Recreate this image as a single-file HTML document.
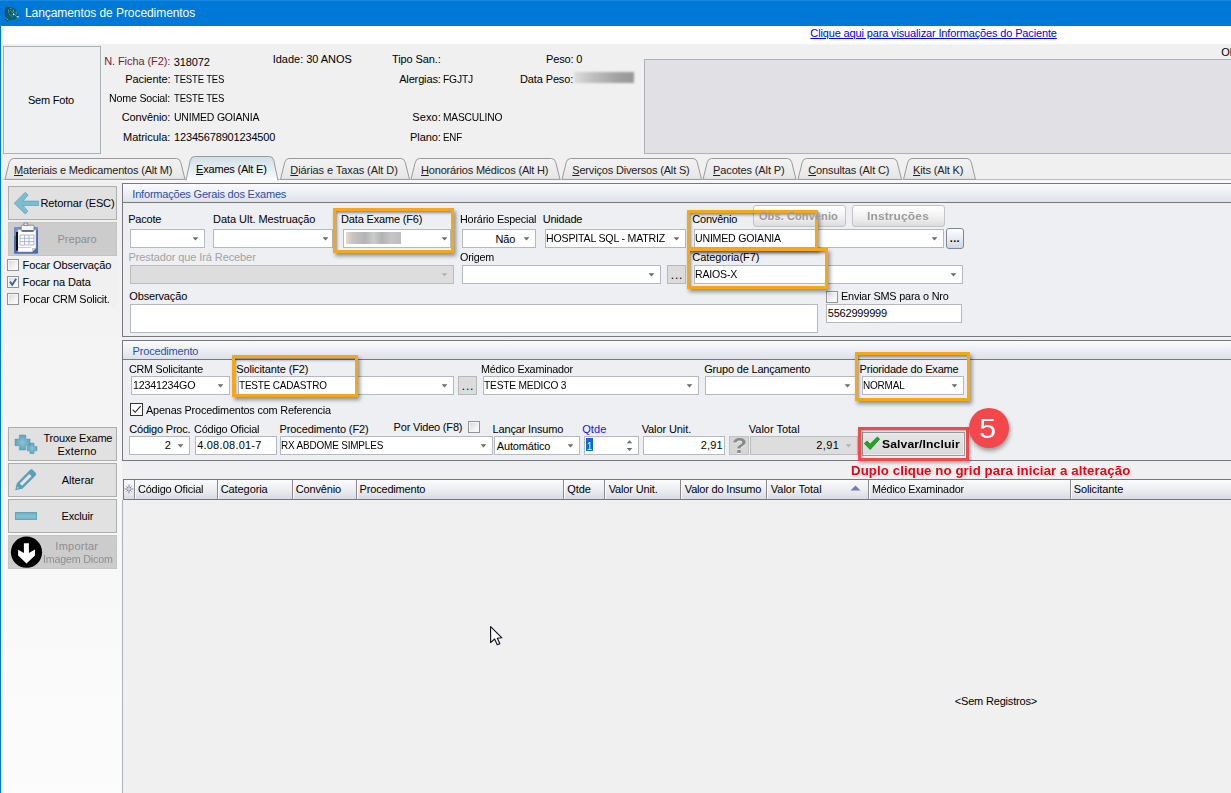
<!DOCTYPE html><html><head><meta charset="utf-8"><title>Lançamentos de Procedimentos</title><style>
html,body{margin:0;padding:0;background:#f0f0f0;}
body{width:1231px;height:793px;overflow:hidden;font-family:"Liberation Sans",sans-serif;font-size:11px;}
#w{position:relative;width:1231px;height:793px;overflow:hidden;background:#f0f0f0;}
#w>div,#w>svg{position:absolute;box-sizing:border-box;}
.t{position:absolute;white-space:nowrap;transform-origin:0 50%;}
u{text-decoration:underline;}

</style></head><body><div id="w">
<div style="left:0px;top:0px;width:1231px;height:26px;background:#0078d7;border-top:1px solid #1a86dc;"></div>
<div style="left:0px;top:26px;width:1231px;height:18px;background:#fff;"></div>
<div style="left:0px;top:26px;width:1px;height:767px;background:#0078d7;"></div>
<div style="left:1px;top:44px;width:2px;height:749px;background:#fafafa;"></div>
<svg style="left:0;top:0" width="26" height="26" viewBox="0 0 26 26"><defs><linearGradient id="gic" x1="0" y1="0" x2="1" y2="1"><stop offset="0" stop-color="#0c4a58"/><stop offset=".6" stop-color="#0a6470"/><stop offset="1" stop-color="#0b5f73"/></linearGradient></defs><path d="M5.2 7.4 Q6.5 5.8 9 7 L14 8.3 Q17.5 10.5 18.4 15.8 L18.9 17.6 Q14 20.8 8 20.6 Q5 19.5 5 17.5 Q4 12 5.2 7.4Z" fill="url(#gic)"/><path d="M8.4 9.8v3.2M10.4 8.6l1.6-.3M10.5 10.5l6 6M9.4 14.3l3 2.6M13.4 9.6v2.6M16.2 11.8v2.8" stroke="#bfe4e4" stroke-width=".9" stroke-dasharray="1 .8" fill="none" opacity=".85"/><circle cx="13.5" cy="14.5" r=".7" fill="#fff"/><path d="M16.4 16.2h2.6v1.4h-2z" fill="#bfe0f0"/><path d="M5.6 18.2l2.6 2.2" stroke="#d6ecf6" stroke-width="1" stroke-dasharray="1 .7"/><path d="M5.2 18.9l2.8 2.3" stroke="#06222c" stroke-width=".8"/></svg>
<div style="left:3px;top:46px;width:98px;height:108px;background:#eff0f2;border:1px solid #a9b0b8;"></div>
<div style="left:574px;top:71.5px;width:60px;height:11.5px;background:linear-gradient(90deg,#dedede,#c4c4c4 25%,#b2b2b2 50%,#a0a0a0 75%,#989898);filter:blur(.8px);"></div>
<div style="left:644px;top:59px;width:596px;height:95px;background:#e1e1e5;border:1px solid #adb2b8;"></div>
<svg style="left:0;top:150px" width="1231" height="36" viewBox="0 150 1231 36"><defs><linearGradient id="ga" x1="0" y1="0" x2="0" y2="1"><stop offset="0" stop-color="#cfe0e7"/><stop offset="1" stop-color="#fbfcfd"/></linearGradient><linearGradient id="gi" x1="0" y1="0" x2="0" y2="1"><stop offset="0" stop-color="#f3f3f3"/><stop offset="1" stop-color="#e6e6e6"/></linearGradient></defs><rect x="3" y="180" width="1230" height="3" fill="#f8f8f8"/><path d="M3 179.5H1231" stroke="#bcbcbc" stroke-width="1"/><path d="M5 179.4 L9.2 162.5 Q10.2 158.5 13.5 158.5 H176.5 Q179.8 158.5 180.8 162.5 L185 179.4 Z" fill="url(#gi)" stroke="#9a9a9a" stroke-width="1"/><path d="M186 180.5 L190.2 160.5 Q191.2 156.5 194.5 156.5 H269.5 Q272.8 156.5 273.8 160.5 L278 180.5" fill="url(#ga)" stroke="#9a9a9a" stroke-width="1"/><path d="M280.5 179.4 L284.7 162.5 Q285.7 158.5 289.0 158.5 H401.0 Q404.3 158.5 405.3 162.5 L409.5 179.4 Z" fill="url(#gi)" stroke="#9a9a9a" stroke-width="1"/><path d="M411 179.4 L415.2 162.5 Q416.2 158.5 419.5 158.5 H551.5 Q554.8 158.5 555.8 162.5 L560 179.4 Z" fill="url(#gi)" stroke="#9a9a9a" stroke-width="1"/><path d="M562 179.4 L566.2 162.5 Q567.2 158.5 570.5 158.5 H693.0 Q696.3 158.5 697.3 162.5 L701.5 179.4 Z" fill="url(#gi)" stroke="#9a9a9a" stroke-width="1"/><path d="M703 179.4 L707.2 162.5 Q708.2 158.5 711.5 158.5 H787.5 Q790.8 158.5 791.8 162.5 L796 179.4 Z" fill="url(#gi)" stroke="#9a9a9a" stroke-width="1"/><path d="M798 179.4 L802.2 162.5 Q803.2 158.5 806.5 158.5 H893.0 Q896.3 158.5 897.3 162.5 L901.5 179.4 Z" fill="url(#gi)" stroke="#9a9a9a" stroke-width="1"/><path d="M903.5 179.4 L907.7 162.5 Q908.7 158.5 912.0 158.5 H967.0 Q970.3 158.5 971.3 162.5 L975.5 179.4 Z" fill="url(#gi)" stroke="#9a9a9a" stroke-width="1"/></svg>
<div style="left:3px;top:181px;width:119px;height:612px;background:linear-gradient(#f0f0f0,#fcfcfc);"></div>
<div style="left:7px;top:258px;width:111px;height:49px;background:#f0f0f0;"></div>
<div style="left:8px;top:186px;width:109px;height:34px;background:#e1e1e1;border:1px solid #adadad;"></div>
<svg style="left:0px;top:186px" width="50" height="34" viewBox="0 186 50 34"><path d="M14.2 203.3 L25.2 192.3 L28.2 195.1 L23 201.1 H38.6 V205.5 H23 L28 211.2 L25.2 214 Z" fill="#7bbcd0" stroke="#5fa3b8" stroke-width=".7"/></svg>
<div style="left:8px;top:222px;width:109px;height:33.5px;background:#cccccc;border:1px solid #c4c4c4;"></div>
<svg style="left:0;top:222px" width="50" height="34" viewBox="0 222 50 34"><rect x="14" y="227" width="24" height="26.7" rx="1" fill="#4a6cb8"/><path d="M14 227h24v3L14 236z" fill="#8ea6d8" opacity=".6"/><path d="M17.8 229.6H36V248l-4 3.9H17.8z" fill="#fff" stroke="#9a9a9a" stroke-width=".5"/><path d="M32 251.9V248h4z" fill="#c8c8c8"/><path d="M20 235h14v10H20zM20 238.3h14M20 241.6h14M24.5 235v10M29 235v10" fill="none" stroke="#9aa8c8" stroke-width=".8"/><path d="M18 247.5h13" stroke="#c0c0c0" stroke-width=".8"/><rect x="21.2" y="225.2" width="12.8" height="6.3" rx="1.2" fill="#f4f4f4" stroke="#6a6a6a" stroke-width=".7"/><rect x="24" y="223" width="3.8" height="2.6" fill="#e0e0e0" stroke="#6a6a6a" stroke-width=".6"/><path d="M22 230.8h11.5" stroke="#333" stroke-width="1"/><rect x="16" y="232" width="2" height="18.5" fill="#111"/></svg>
<div style="left:7px;top:259px;width:12px;height:12px;background:linear-gradient(135deg,#d4d7dc,#f6f6f6 70%,#fdfdfd);border:1px solid #929394;box-shadow:inset 0 0 0 1px #f6f6f6;"></div>
<div style="left:7px;top:276px;width:12px;height:12px;background:linear-gradient(135deg,#d4d7dc,#f6f6f6 70%,#fdfdfd);border:1px solid #929394;box-shadow:inset 0 0 0 1px #f6f6f6;"></div>
<svg style="left:8px;top:277px" width="10" height="10" viewBox="0 0 10 10"><path d="M2 4.6 L4.2 7.8 L8.2 1.8" stroke="#4664a0" stroke-width="1.9" fill="none"/></svg>
<div style="left:7px;top:293px;width:12px;height:12px;background:linear-gradient(135deg,#d4d7dc,#f6f6f6 70%,#fdfdfd);border:1px solid #929394;box-shadow:inset 0 0 0 1px #f6f6f6;"></div>
<div style="left:8px;top:427px;width:109px;height:34px;background:#e1e1e1;border:1px solid #adadad;"></div>
<svg style="left:0;top:427px" width="50" height="34" viewBox="0 427 50 34"><defs><radialGradient id="gp" cx=".5" cy=".5" r=".6"><stop offset="0" stop-color="#86c5d7"/><stop offset="1" stop-color="#5a9db4"/></radialGradient></defs><path d="M19.3 435h6.5v4.1h4.3v6.6h-4.3v4.3h-6.5v-4.3H15v-6.6h4.3z" fill="url(#gp)" stroke="#5596ad" stroke-width=".5"/><path d="M29.9 443.1h4.2v3.5H37v4.2h-2.9v2.8h-4.2v-2.8h-2.7v-4.2h2.7z" fill="url(#gp)" stroke="#5596ad" stroke-width=".5"/></svg>
<div style="left:8px;top:463px;width:109px;height:33.5px;background:#e1e1e1;border:1px solid #adadad;"></div>
<svg style="left:0;top:463px" width="50" height="34" viewBox="0 463 50 34"><g transform="translate(15.2 490.3) rotate(-45)"><path d="M0 0 L6.2 -3.9 H25 Q26.8 -3.9 26.8 -2.1 V2.1 Q26.8 3.9 25 3.9 H6.2 Z" fill="#5c9fb6"/><rect x="8" y="-1.6" width="13.5" height="3.2" fill="#e4e4e4"/><circle cx="3.6" cy="0" r=".9" fill="#a8d0dc"/></g></svg>
<div style="left:8px;top:499px;width:109px;height:33.5px;background:#e1e1e1;border:1px solid #adadad;"></div>
<div style="left:15px;top:512px;width:22px;height:8px;background:linear-gradient(#6fb0c5,#82c2d5 50%,#74b6ca);border:1px solid #62a5bb;"></div>
<div style="left:8px;top:535px;width:109px;height:33.5px;background:#cccccc;border:1px solid #c4c4c4;"></div>
<svg style="left:0;top:535px" width="50" height="34" viewBox="0 535 50 34"><circle cx="26.5" cy="552.2" r="15.6" fill="#000"/><path d="M23.9 543.3 H28.9 V553 L35 549.5 V555.4 L26.5 563.5 L18.1 555.4 V549.8 L23.9 553 Z" fill="#fff"/></svg>
<div style="left:122px;top:183px;width:1118px;height:154px;background:#eeeff2;border:1px solid #77777f;"></div>
<div style="left:123px;top:184px;width:1117px;height:19px;background:linear-gradient(#fbfbfc,#eef0f4 45%,#dee1e8);border-bottom:1px solid #77777f;"></div>
<div style="left:122px;top:340px;width:1118px;height:121px;background:#eeeff2;border:1px solid #77777f;"></div>
<div style="left:123px;top:341px;width:1117px;height:18.5px;background:linear-gradient(#fbfbfc,#eef0f4 45%,#dee1e8);border-bottom:1px solid #77777f;"></div>
<div style="left:122px;top:500px;width:1px;height:293px;background:#aab0b7;"></div>
<div style="left:130px;top:229px;width:75px;height:19px;background:#fff;border:1px solid #b4b8bf;"></div>
<svg style="left:191.5px;top:237.0px" width="7" height="4" viewBox="0 0 7 4"><path d="M0.6 0.2h5.8L3.5 3.5z" fill="#6a6a6a"/></svg>
<div style="left:213px;top:229px;width:120px;height:19px;background:#fff;border:1px solid #b4b8bf;"></div>
<svg style="left:321.5px;top:237.0px" width="7" height="4" viewBox="0 0 7 4"><path d="M0.6 0.2h5.8L3.5 3.5z" fill="#6a6a6a"/></svg>
<div style="left:343px;top:229px;width:108px;height:19px;background:#fff;border:1px solid #b4b8bf;"></div>
<svg style="left:440.5px;top:237.0px" width="7" height="4" viewBox="0 0 7 4"><path d="M0.6 0.2h5.8L3.5 3.5z" fill="#6a6a6a"/></svg>
<div style="left:346px;top:232px;width:55px;height:11.5px;background:linear-gradient(90deg,#ecd8cc,#c4c4c4 12%,#b4b4b4 35%,#cbcbcb 50%,#b2b2b2 65%,#c6c6c6 82%,#bdbdbd);filter:blur(.7px);"></div>
<div style="left:462px;top:229px;width:74px;height:19px;background:#fff;border:1px solid #b4b8bf;"></div>
<svg style="left:522.5px;top:237.0px" width="7" height="4" viewBox="0 0 7 4"><path d="M0.6 0.2h5.8L3.5 3.5z" fill="#6a6a6a"/></svg>
<div style="left:545px;top:229px;width:140.5px;height:19px;background:#fff;border:1px solid #b4b8bf;"></div>
<svg style="left:672.5px;top:237.0px" width="7" height="4" viewBox="0 0 7 4"><path d="M0.6 0.2h5.8L3.5 3.5z" fill="#6a6a6a"/></svg>
<div style="left:753px;top:205px;width:92.5px;height:22px;background:linear-gradient(#ffffff,#f3f3f3 50%,#dddddd);border:1px solid #c3c3c3;border-radius:3px;"></div>
<div style="left:852px;top:205px;width:92.5px;height:22px;background:linear-gradient(#ffffff,#f3f3f3 50%,#dddddd);border:1px solid #c3c3c3;border-radius:3px;"></div>
<div style="left:694px;top:229px;width:250px;height:19px;background:#fff;border:1px solid #b4b8bf;"></div>
<svg style="left:930.5px;top:237.0px" width="7" height="4" viewBox="0 0 7 4"><path d="M0.6 0.2h5.8L3.5 3.5z" fill="#6a6a6a"/></svg>
<div style="left:946px;top:228px;width:17.5px;height:20.5px;background:linear-gradient(#fdfdfd,#e9ecf2 50%,#cfd6e4);border:1px solid #7f8793;border-radius:3px;"></div>
<div style="left:130px;top:265px;width:324px;height:19px;background:#dddddd;border:1px solid #bcbcbc;"></div>
<svg style="left:440.5px;top:273.0px" width="7" height="4" viewBox="0 0 7 4"><path d="M0.6 0.2h5.8L3.5 3.5z" fill="#b3b3b3"/></svg>
<div style="left:462px;top:265px;width:199px;height:19px;background:#fff;border:1px solid #b4b8bf;"></div>
<svg style="left:647.5px;top:273.0px" width="7" height="4" viewBox="0 0 7 4"><path d="M0.6 0.2h5.8L3.5 3.5z" fill="#6a6a6a"/></svg>
<div style="left:667px;top:265px;width:19px;height:19px;background:#dcdcdc;border:1px solid #b8b8b8;"></div>
<div style="left:694px;top:265px;width:269px;height:19px;background:#fff;border:1px solid #b4b8bf;"></div>
<svg style="left:949.5px;top:273.0px" width="7" height="4" viewBox="0 0 7 4"><path d="M0.6 0.2h5.8L3.5 3.5z" fill="#6a6a6a"/></svg>
<div style="left:130px;top:304px;width:688px;height:29px;background:#fff;border:1px solid #b4b8bf;"></div>
<div style="left:826px;top:291px;width:12px;height:12px;background:linear-gradient(135deg,#d4d7dc,#f6f6f6 70%,#fdfdfd);border:1px solid #929394;box-shadow:inset 0 0 0 1px #f6f6f6;"></div>
<div style="left:826px;top:304px;width:136px;height:19px;background:#fff;border:1px solid #b4b8bf;"></div>
<div style="left:131px;top:376px;width:99px;height:19px;background:#fff;border:1px solid #b4b8bf;"></div>
<svg style="left:216.5px;top:384.0px" width="7" height="4" viewBox="0 0 7 4"><path d="M0.6 0.2h5.8L3.5 3.5z" fill="#6a6a6a"/></svg>
<div style="left:238px;top:376px;width:216px;height:19px;background:#fff;border:1px solid #b4b8bf;"></div>
<svg style="left:440.5px;top:384.0px" width="7" height="4" viewBox="0 0 7 4"><path d="M0.6 0.2h5.8L3.5 3.5z" fill="#6a6a6a"/></svg>
<div style="left:458px;top:376px;width:19px;height:19px;background:#dcdcdc;border:1px solid #b8b8b8;"></div>
<div style="left:483px;top:376px;width:216px;height:19px;background:#fff;border:1px solid #b4b8bf;"></div>
<svg style="left:685.5px;top:384.0px" width="7" height="4" viewBox="0 0 7 4"><path d="M0.6 0.2h5.8L3.5 3.5z" fill="#6a6a6a"/></svg>
<div style="left:705px;top:376px;width:152px;height:19px;background:#fff;border:1px solid #b4b8bf;"></div>
<svg style="left:843.5px;top:384.0px" width="7" height="4" viewBox="0 0 7 4"><path d="M0.6 0.2h5.8L3.5 3.5z" fill="#6a6a6a"/></svg>
<div style="left:862px;top:376px;width:102px;height:19px;background:#fff;border:1px solid #b4b8bf;"></div>
<svg style="left:950.5px;top:384.0px" width="7" height="4" viewBox="0 0 7 4"><path d="M0.6 0.2h5.8L3.5 3.5z" fill="#6a6a6a"/></svg>
<div style="left:130px;top:403px;width:13px;height:13px;background:#fff;border:1px solid #333;"></div>
<svg style="left:130px;top:403px" width="13" height="13" viewBox="0 0 13 13"><path d="M2.6 6.6 L5.2 9.3 L10.6 3.2" stroke="#222" stroke-width="1.1" fill="none"/></svg>
<div style="left:129px;top:436px;width:61px;height:19px;background:#fff;border:1px solid #b4b8bf;"></div>
<svg style="left:176.5px;top:444.0px" width="7" height="4" viewBox="0 0 7 4"><path d="M0.6 0.2h5.8L3.5 3.5z" fill="#6a6a6a"/></svg>
<div style="left:195px;top:436px;width:82px;height:19px;background:#fff;border:1px solid #b4b8bf;"></div>
<div style="left:280px;top:436px;width:212.5px;height:19px;background:#fff;border:1px solid #b4b8bf;"></div>
<svg style="left:479.5px;top:444.0px" width="7" height="4" viewBox="0 0 7 4"><path d="M0.6 0.2h5.8L3.5 3.5z" fill="#6a6a6a"/></svg>
<div style="left:468px;top:421px;width:12px;height:12px;background:linear-gradient(135deg,#d4d7dc,#f6f6f6 70%,#fdfdfd);border:1px solid #929394;box-shadow:inset 0 0 0 1px #f6f6f6;"></div>
<div style="left:494px;top:436px;width:86px;height:19px;background:#fff;border:1px solid #b4b8bf;"></div>
<svg style="left:566.9px;top:444.0px" width="7" height="4" viewBox="0 0 7 4"><path d="M0.6 0.2h5.8L3.5 3.5z" fill="#6a6a6a"/></svg>
<div style="left:584px;top:436px;width:54.5px;height:19px;background:#fff;border:1px solid #b4b8bf;"></div>
<div style="left:586px;top:438px;width:7px;height:13px;background:#0a6cd6;"></div>
<svg style="left:620px;top:436px" width="18" height="19" viewBox="620 436 18 19"><path d="M626.7 443.2 L629.5 440.2 L632.3 443.2z" fill="#6a6a6a"/><path d="M626.7 448 L629.5 451 L632.3 448z" fill="#6a6a6a"/></svg>
<div style="left:643px;top:436px;width:82px;height:19px;background:#fff;border:1px solid #b4b8bf;"></div>
<div style="left:729px;top:436px;width:20px;height:19px;background:#d6d6d6;border:1px solid #c2c2c2;"></div>
<div style="left:750px;top:436px;width:108px;height:19px;background:#dddddd;border:1px solid #bcbcbc;"></div>
<svg style="left:844.5px;top:444.0px" width="7" height="4" viewBox="0 0 7 4"><path d="M0.6 0.2h5.8L3.5 3.5z" fill="#b3b3b3"/></svg>
<div style="left:861.5px;top:432px;width:103.0px;height:23.5px;background:linear-gradient(#e6e6e6,#d8d8d8);border:1px solid #9a9a9a;box-shadow:inset 0 0 0 1px #ececec;"></div>
<svg style="left:863px;top:435px" width="18" height="17" viewBox="0 0 18 17"><path d="M1.4 8.4 L4.2 6 L7 9.2 L14.4 2 L16.6 4 L7.2 14.6 Z" fill="#1fa81f" stroke="#0d7a12" stroke-width=".7"/></svg>
<div style="left:858px;top:427px;width:111px;height:34px;border:3.4px solid #f04a4c;box-shadow:1px 2px 3px rgba(0,0,0,.3), inset 1px 1px 2px rgba(0,0,0,.3);"></div>
<div style="left:968.5px;top:408px;width:40px;height:40px;border-radius:50%;background:#f3474b;box-shadow:1px 3px 4px rgba(0,0,0,.35);"></div>
<div style="left:333px;top:208px;width:121px;height:45px;border:3px solid #f6a716;box-shadow:2px 3px 4px rgba(0,0,0,.4), inset 2px 3px 3px -1px rgba(0,0,0,.42);"></div>
<div style="left:687px;top:210px;width:131px;height:39.5px;border:3px solid #f6a716;box-shadow:2px 3px 4px rgba(0,0,0,.4), inset 2px 3px 3px -1px rgba(0,0,0,.42);"></div>
<div style="left:687px;top:248px;width:141px;height:41px;border:3px solid #f6a716;box-shadow:2px 3px 4px rgba(0,0,0,.4), inset 2px 3px 3px -1px rgba(0,0,0,.42);"></div>
<div style="left:232px;top:355px;width:126px;height:42px;border:3px solid #f6a716;box-shadow:2px 3px 4px rgba(0,0,0,.4), inset 2px 3px 3px -1px rgba(0,0,0,.42);"></div>
<div style="left:855px;top:352px;width:115px;height:49px;border:3px solid #f6a716;box-shadow:2px 3px 4px rgba(0,0,0,.4), inset 2px 3px 3px -1px rgba(0,0,0,.42);"></div>
<div style="left:123px;top:479px;width:1117px;height:20.5px;background:linear-gradient(#fafafb,#eceef2 50%,#d9dce4);border:1px solid #77777f;border-right:none;"></div>
<div style="left:134.0px;top:480px;width:1.0px;height:19px;background:#8a8a8a;"></div>
<div style="left:135.0px;top:480px;width:1.0px;height:19px;background:#fcfcfc;"></div>
<div style="left:216.5px;top:480px;width:1.0px;height:19px;background:#8a8a8a;"></div>
<div style="left:217.5px;top:480px;width:1.0px;height:19px;background:#fcfcfc;"></div>
<div style="left:291.5px;top:480px;width:1.0px;height:19px;background:#8a8a8a;"></div>
<div style="left:292.5px;top:480px;width:1.0px;height:19px;background:#fcfcfc;"></div>
<div style="left:355.5px;top:480px;width:1.0px;height:19px;background:#8a8a8a;"></div>
<div style="left:356.5px;top:480px;width:1.0px;height:19px;background:#fcfcfc;"></div>
<div style="left:563.0px;top:480px;width:1.0px;height:19px;background:#8a8a8a;"></div>
<div style="left:564.0px;top:480px;width:1.0px;height:19px;background:#fcfcfc;"></div>
<div style="left:604.0px;top:480px;width:1.0px;height:19px;background:#8a8a8a;"></div>
<div style="left:605.0px;top:480px;width:1.0px;height:19px;background:#fcfcfc;"></div>
<div style="left:680.0px;top:480px;width:1.0px;height:19px;background:#8a8a8a;"></div>
<div style="left:681.0px;top:480px;width:1.0px;height:19px;background:#fcfcfc;"></div>
<div style="left:766.0px;top:480px;width:1.0px;height:19px;background:#8a8a8a;"></div>
<div style="left:767.0px;top:480px;width:1.0px;height:19px;background:#fcfcfc;"></div>
<div style="left:867.5px;top:480px;width:1.0px;height:19px;background:#8a8a8a;"></div>
<div style="left:868.5px;top:480px;width:1.0px;height:19px;background:#fcfcfc;"></div>
<div style="left:1069.5px;top:480px;width:1.0px;height:19px;background:#8a8a8a;"></div>
<div style="left:1070.5px;top:480px;width:1.0px;height:19px;background:#fcfcfc;"></div>
<svg style="left:124px;top:483px" width="10" height="12" viewBox="0 0 10 12"><path d="M6.00 6.00L9.40 6.00M5.71 6.71L7.55 8.55M5.00 7.00L5.00 10.40M4.29 6.71L2.45 8.55M4.00 6.00L0.60 6.00M4.29 5.29L2.45 3.45M5.00 5.00L5.00 1.60M5.71 5.29L7.55 3.45" stroke="#62628a" stroke-width=".75" fill="none"/></svg>
<svg style="left:850px;top:485px" width="11" height="6" viewBox="0 0 11 6"><path d="M0.5 5.5 L5.5 0.5 L10.5 5.5z" fill="#7a7aa6"/></svg>
<svg style="left:485px;top:620px" width="24" height="30" viewBox="485 620 24 30"><path d="M490.6 626.6 V642.6 L494.6 639 L497.3 644.7 L499.8 643.6 L497.3 638.2 L501.9 637.8 Z" fill="#fff" stroke="#14141e" stroke-width="1.15" stroke-linejoin="round"/></svg>
<span class="t" style="left:24.95px;top:5.84px;font-size:12px;line-height:14px;color:#fff;letter-spacing:-0.067px;">Lançamentos de Procedimentos</span>
<span class="t" style="left:810.35px;top:26.69px;font-size:11px;line-height:13px;color:#0000ff;letter-spacing:-0.143px;text-decoration:underline;">Clique aqui para visualizar Informações do Paciente</span>
<span class="t" style="left:27.95px;top:93.69px;font-size:11px;line-height:13px;color:#000;letter-spacing:-0.200px;">Sem Foto</span>
<span class="t" style="left:104.15px;top:54.69px;font-size:11px;line-height:13px;color:#7d1a2a;letter-spacing:-0.074px;">N. Ficha (F2):</span>
<span class="t" style="left:173.75px;top:55.69px;font-size:11px;line-height:13px;color:#000;letter-spacing:-0.118px;">318072</span>
<span class="t" style="left:125.25px;top:72.69px;font-size:11px;line-height:13px;color:#000;letter-spacing:-0.075px;">Paciente:</span>
<span class="t" style="left:174.15px;top:72.69px;font-size:11px;line-height:13px;color:#000;letter-spacing:-0.200px;transform:scaleX(0.8669);">TESTE TES</span>
<span class="t" style="left:109.45px;top:91.69px;font-size:11px;line-height:13px;color:#000;letter-spacing:-0.200px;transform:scaleX(0.9681);">Nome Social:</span>
<span class="t" style="left:174.15px;top:91.69px;font-size:11px;line-height:13px;color:#000;letter-spacing:-0.200px;transform:scaleX(0.8669);">TESTE TES</span>
<span class="t" style="left:121.75px;top:110.69px;font-size:11px;line-height:13px;color:#000;letter-spacing:-0.118px;">Convênio:</span>
<span class="t" style="left:174.15px;top:110.69px;font-size:11px;line-height:13px;color:#000;letter-spacing:-0.200px;transform:scaleX(0.9523);">UNIMED GOIANIA</span>
<span class="t" style="left:123.05px;top:130.69px;font-size:11px;line-height:13px;color:#000;letter-spacing:-0.047px;">Matricula:</span>
<span class="t" style="left:174.05px;top:130.69px;font-size:11px;line-height:13px;color:#000;letter-spacing:-0.169px;">12345678901234500</span>
<span class="t" style="left:272.75px;top:52.69px;font-size:11px;line-height:13px;color:#000;letter-spacing:-0.028px;">Idade: 30 ANOS</span>
<span class="t" style="left:391.95px;top:52.69px;font-size:11px;line-height:13px;color:#000;letter-spacing:-0.107px;">Tipo San.:</span>
<span class="t" style="left:399.15px;top:72.69px;font-size:11px;line-height:13px;color:#000;letter-spacing:-0.142px;">Alergias:</span>
<span class="t" style="left:443.25px;top:72.69px;font-size:11px;line-height:13px;color:#000;letter-spacing:-0.200px;transform:scaleX(0.9363);">FGJTJ</span>
<span class="t" style="left:412.25px;top:110.69px;font-size:11px;line-height:13px;color:#000;letter-spacing:0.099px;">Sexo:</span>
<span class="t" style="left:443.25px;top:110.69px;font-size:11px;line-height:13px;color:#000;letter-spacing:-0.200px;transform:scaleX(0.9304);">MASCULINO</span>
<span class="t" style="left:410.05px;top:130.69px;font-size:11px;line-height:13px;color:#000;letter-spacing:-0.091px;">Plano:</span>
<span class="t" style="left:443.25px;top:130.69px;font-size:11px;line-height:13px;color:#000;letter-spacing:-0.200px;transform:scaleX(0.8860);">ENF</span>
<span class="t" style="left:546.05px;top:52.69px;font-size:11px;line-height:13px;color:#000;letter-spacing:-0.163px;">Peso: 0</span>
<span class="t" style="left:520.05px;top:72.69px;font-size:11px;line-height:13px;color:#000;letter-spacing:-0.132px;">Data Peso:</span>
<span class="t" style="left:1221.25px;top:45.69px;font-size:11px;line-height:13px;color:#000;">Ob</span>
<span class="t" style="left:14.05px;top:163.69px;font-size:11px;line-height:13px;color:#222;letter-spacing:-0.174px;"><u>M</u>ateriais e Medicamentos (Alt M)</span>
<span class="t" style="left:196.05px;top:162.69px;font-size:11px;line-height:13px;color:#000;letter-spacing:-0.193px;"><u>E</u>xames (Alt E)</span>
<span class="t" style="left:290.35px;top:163.69px;font-size:11px;line-height:13px;color:#222;letter-spacing:-0.081px;"><u>D</u>iárias e Taxas (Alt D)</span>
<span class="t" style="left:421.05px;top:163.69px;font-size:11px;line-height:13px;color:#222;letter-spacing:-0.184px;"><u>H</u>onorários Médicos (Alt H)</span>
<span class="t" style="left:572.25px;top:163.69px;font-size:11px;line-height:13px;color:#222;letter-spacing:-0.174px;"><u>S</u>erviços Diversos (Alt S)</span>
<span class="t" style="left:713.05px;top:163.69px;font-size:11px;line-height:13px;color:#222;letter-spacing:-0.129px;"><u>P</u>acotes (Alt P)</span>
<span class="t" style="left:808.25px;top:163.69px;font-size:11px;line-height:13px;color:#222;letter-spacing:-0.118px;"><u>C</u>onsultas (Alt C)</span>
<span class="t" style="left:913.05px;top:163.69px;font-size:11px;line-height:13px;color:#222;letter-spacing:-0.146px;"><u>K</u>its (Alt K)</span>
<span class="t" style="left:40.55px;top:196.69px;font-size:11px;line-height:13px;color:#000;letter-spacing:-0.137px;">Retornar (ESC)</span>
<span class="t" style="left:57.55px;top:232.69px;font-size:11px;line-height:13px;color:#8e8e8e;letter-spacing:-0.009px;">Preparo</span>
<span class="t" style="left:22.55px;top:258.69px;font-size:11px;line-height:13px;color:#000;letter-spacing:-0.113px;">Focar Observação</span>
<span class="t" style="left:22.55px;top:275.69px;font-size:11px;line-height:13px;color:#000;letter-spacing:-0.115px;">Focar na Data</span>
<span class="t" style="left:22.95px;top:292.69px;font-size:11px;line-height:13px;color:#000;letter-spacing:-0.200px;transform:scaleX(0.9840);">Focar CRM Solicit.</span>
<span class="t" style="left:43.45px;top:431.69px;font-size:11px;line-height:13px;color:#000;letter-spacing:-0.190px;">Trouxe Exame</span>
<span class="t" style="left:57.55px;top:444.69px;font-size:11px;line-height:13px;color:#000;letter-spacing:0.158px;">Externo</span>
<span class="t" style="left:61.65px;top:473.69px;font-size:11px;line-height:13px;color:#000;letter-spacing:0.033px;">Alterar</span>
<span class="t" style="left:61.55px;top:509.69px;font-size:11px;line-height:13px;color:#000;letter-spacing:-0.200px;">Excluir</span>
<span class="t" style="left:55.35px;top:539.69px;font-size:11px;line-height:13px;color:#8e8e8e;letter-spacing:0.233px;">Importar</span>
<span class="t" style="left:43.05px;top:552.69px;font-size:11px;line-height:13px;color:#8e8e8e;letter-spacing:-0.200px;transform:scaleX(0.9727);">Imagem Dicom</span>
<span class="t" style="left:132.35px;top:187.69px;font-size:11px;line-height:13px;color:#2a4ea6;letter-spacing:-0.200px;">Informações Gerais dos Exames</span>
<span class="t" style="left:132.55px;top:344.69px;font-size:11px;line-height:13px;color:#2a4ea6;letter-spacing:-0.175px;">Procedimento</span>
<span class="t" style="left:128.15px;top:212.69px;font-size:11px;line-height:13px;color:#000;letter-spacing:-0.200px;">Pacote</span>
<span class="t" style="left:213.05px;top:212.69px;font-size:11px;line-height:13px;color:#000;letter-spacing:-0.050px;">Data Ult. Mestruação</span>
<span class="t" style="left:341.05px;top:212.69px;font-size:11px;line-height:13px;color:#000;letter-spacing:-0.172px;">Data Exame (F6)</span>
<span class="t" style="left:460.25px;top:212.69px;font-size:11px;line-height:13px;color:#000;letter-spacing:-0.200px;transform:scaleX(0.9838);">Horário Especial</span>
<span class="t" style="left:495.55px;top:232.69px;font-size:11px;line-height:13px;color:#000;letter-spacing:-0.200px;">Não</span>
<span class="t" style="left:542.65px;top:212.69px;font-size:11px;line-height:13px;color:#000;letter-spacing:-0.200px;">Unidade</span>
<span class="t" style="left:545.65px;top:231.69px;font-size:11px;line-height:13px;color:#000;letter-spacing:-0.200px;transform:scaleX(0.9639);">HOSPITAL SQL - MATRIZ</span>
<span class="t" style="left:758.95px;top:209.69px;font-size:11px;line-height:13px;color:#9b9b9b;font-weight:bold;letter-spacing:0.100px;">Obs. Convênio</span>
<span class="t" style="left:866.55px;top:209.69px;font-size:11px;line-height:13px;color:#9b9b9b;font-weight:bold;letter-spacing:0.100px;transform:scaleX(1.0936);">Instruções</span>
<span class="t" style="left:692.25px;top:212.69px;font-size:11px;line-height:13px;color:#000;letter-spacing:-0.194px;">Convênio</span>
<span class="t" style="left:694.65px;top:231.69px;font-size:11px;line-height:13px;color:#000;letter-spacing:-0.200px;transform:scaleX(0.9607);">UNIMED GOIANIA</span>
<span class="t" style="left:949.75px;top:231.69px;font-size:11px;line-height:13px;color:#000;font-weight:bold;letter-spacing:0.363px;">...</span>
<span class="t" style="left:128.55px;top:250.69px;font-size:11px;line-height:13px;color:#a2a2a2;letter-spacing:-0.099px;">Prestador que Irá Receber</span>
<span class="t" style="left:460.25px;top:250.69px;font-size:11px;line-height:13px;color:#000;letter-spacing:-0.200px;transform:scaleX(0.9791);">Origem</span>
<span class="t" style="left:670.85px;top:267.84px;font-size:12px;line-height:14px;color:#000;letter-spacing:0.700px;">...</span>
<span class="t" style="left:692.25px;top:250.69px;font-size:11px;line-height:13px;color:#000;letter-spacing:-0.058px;">Categoria(F7)</span>
<span class="t" style="left:694.65px;top:267.69px;font-size:11px;line-height:13px;color:#000;letter-spacing:-0.200px;transform:scaleX(0.9602);">RAIOS-X</span>
<span class="t" style="left:129.25px;top:289.69px;font-size:11px;line-height:13px;color:#000;letter-spacing:-0.141px;">Observação</span>
<span class="t" style="left:840.55px;top:289.69px;font-size:11px;line-height:13px;color:#000;letter-spacing:-0.200px;transform:scaleX(0.9883);">Enviar SMS para o Nro</span>
<span class="t" style="left:827.75px;top:306.69px;font-size:11px;line-height:13px;color:#000;letter-spacing:-0.199px;">5562999999</span>
<span class="t" style="left:129.05px;top:362.69px;font-size:11px;line-height:13px;color:#000;letter-spacing:-0.200px;transform:scaleX(0.9748);">CRM Solicitante</span>
<span class="t" style="left:133.05px;top:378.69px;font-size:11px;line-height:13px;color:#000;letter-spacing:-0.200px;transform:scaleX(0.9724);">12341234GO</span>
<span class="t" style="left:236.25px;top:362.69px;font-size:11px;line-height:13px;color:#000;letter-spacing:-0.117px;">Solicitante (F2)</span>
<span class="t" style="left:239.05px;top:378.69px;font-size:11px;line-height:13px;color:#000;letter-spacing:-0.200px;transform:scaleX(0.9061);">TESTE CADASTRO</span>
<span class="t" style="left:461.85px;top:378.84px;font-size:12px;line-height:14px;color:#000;letter-spacing:0.700px;">...</span>
<span class="t" style="left:481.25px;top:362.69px;font-size:11px;line-height:13px;color:#000;letter-spacing:-0.200px;transform:scaleX(0.9806);">Médico Examinador</span>
<span class="t" style="left:484.25px;top:378.69px;font-size:11px;line-height:13px;color:#000;letter-spacing:-0.200px;transform:scaleX(0.9255);">TESTE MEDICO 3</span>
<span class="t" style="left:704.25px;top:362.69px;font-size:11px;line-height:13px;color:#000;letter-spacing:-0.189px;">Grupo de Lançamento</span>
<span class="t" style="left:859.55px;top:362.69px;font-size:11px;line-height:13px;color:#000;letter-spacing:-0.200px;">Prioridade do Exame</span>
<span class="t" style="left:862.65px;top:378.69px;font-size:11px;line-height:13px;color:#000;letter-spacing:-0.200px;transform:scaleX(0.9068);">NORMAL</span>
<span class="t" style="left:145.55px;top:403.69px;font-size:11px;line-height:13px;color:#000;letter-spacing:-0.200px;transform:scaleX(0.9896);">Apenas Procedimentos com Referencia</span>
<span class="t" style="left:129.25px;top:422.69px;font-size:11px;line-height:13px;color:#000;letter-spacing:-0.200px;">Código Proc.</span>
<span class="t" style="left:164.75px;top:438.69px;font-size:11px;line-height:13px;color:#000;letter-spacing:0.149px;">2</span>
<span class="t" style="left:194.05px;top:422.69px;font-size:11px;line-height:13px;color:#000;letter-spacing:-0.200px;transform:scaleX(0.9933);">Código Oficial</span>
<span class="t" style="left:197.15px;top:438.69px;font-size:11px;line-height:13px;color:#000;letter-spacing:0.223px;">4.08.08.01-7</span>
<span class="t" style="left:279.55px;top:422.69px;font-size:11px;line-height:13px;color:#000;letter-spacing:-0.125px;">Procedimento (F2)</span>
<span class="t" style="left:281.25px;top:438.69px;font-size:11px;line-height:13px;color:#000;letter-spacing:-0.200px;transform:scaleX(0.9055);">RX ABDOME SIMPLES</span>
<span class="t" style="left:393.55px;top:420.69px;font-size:11px;line-height:13px;color:#000;letter-spacing:-0.184px;">Por Video (F8)</span>
<span class="t" style="left:492.55px;top:422.69px;font-size:11px;line-height:13px;color:#000;letter-spacing:-0.160px;">Lançar Insumo</span>
<span class="t" style="left:496.85px;top:439.69px;font-size:11px;line-height:13px;color:#000;letter-spacing:-0.166px;">Automático</span>
<span class="t" style="left:582.25px;top:422.69px;font-size:11px;line-height:13px;color:#1414f0;letter-spacing:0.060px;">Qtde</span>
<span class="t" style="left:586.75px;top:439.69px;font-size:11px;line-height:13px;color:#fff;letter-spacing:-0.200px;transform:scaleX(0.8605);">1</span>
<span class="t" style="left:641.65px;top:422.69px;font-size:11px;line-height:13px;color:#000;letter-spacing:-0.094px;">Valor Unit.</span>
<span class="t" style="left:700.75px;top:438.69px;font-size:11px;line-height:13px;color:#000;letter-spacing:0.180px;">2,91</span>
<span class="t" style="left:732.15px;top:434.38px;font-size:22px;line-height:24px;color:#8a8a8a;font-weight:bold;letter-spacing:0.700px;transform:scaleX(1.1168);text-shadow:0 1px 0 #eee;">?</span>
<span class="t" style="left:748.85px;top:422.69px;font-size:11px;line-height:13px;color:#000;letter-spacing:-0.017px;">Valor Total</span>
<span class="t" style="left:816.25px;top:438.69px;font-size:11px;line-height:13px;color:#000;letter-spacing:0.402px;">2,91</span>
<span class="t" style="left:881.65px;top:437.69px;font-size:11px;line-height:13px;color:#000;font-weight:bold;letter-spacing:0.100px;transform:scaleX(1.1034);">Salvar/Incluir</span>
<span class="t" style="left:979.25px;top:413.42px;font-size:28.5px;line-height:30px;color:#fff;letter-spacing:0.700px;transform:scaleX(1.0833);">5</span>
<span class="t" style="left:850.55px;top:463.67px;font-size:12.5px;line-height:14px;color:#f00010;font-weight:bold;letter-spacing:0.100px;transform:scaleX(1.0568);">Duplo clique no grid para iniciar a alteração</span>
<span class="t" style="left:138.05px;top:482.69px;font-size:11px;line-height:13px;color:#000;letter-spacing:-0.200px;transform:scaleX(0.9933);">Código Oficial</span>
<span class="t" style="left:220.75px;top:482.69px;font-size:11px;line-height:13px;color:#000;letter-spacing:-0.094px;">Categoria</span>
<span class="t" style="left:295.75px;top:482.69px;font-size:11px;line-height:13px;color:#000;letter-spacing:-0.152px;">Convênio</span>
<span class="t" style="left:359.55px;top:482.69px;font-size:11px;line-height:13px;color:#000;letter-spacing:-0.175px;">Procedimento</span>
<span class="t" style="left:567.25px;top:482.69px;font-size:11px;line-height:13px;color:#000;letter-spacing:-0.107px;">Qtde</span>
<span class="t" style="left:608.65px;top:482.69px;font-size:11px;line-height:13px;color:#000;letter-spacing:-0.144px;">Valor Unit.</span>
<span class="t" style="left:684.85px;top:482.69px;font-size:11px;line-height:13px;color:#000;letter-spacing:-0.193px;">Valor do Insumo</span>
<span class="t" style="left:770.85px;top:482.69px;font-size:11px;line-height:13px;color:#000;letter-spacing:-0.017px;">Valor Total</span>
<span class="t" style="left:871.55px;top:482.69px;font-size:11px;line-height:13px;color:#000;letter-spacing:-0.200px;transform:scaleX(0.9797);">Médico Examinador</span>
<span class="t" style="left:1073.75px;top:482.69px;font-size:11px;line-height:13px;color:#000;letter-spacing:-0.122px;">Solicitante</span>
<span class="t" style="left:954.75px;top:694.69px;font-size:11px;line-height:13px;color:#000;letter-spacing:-0.182px;">&lt;Sem Registros&gt;</span>
</div></body></html>
